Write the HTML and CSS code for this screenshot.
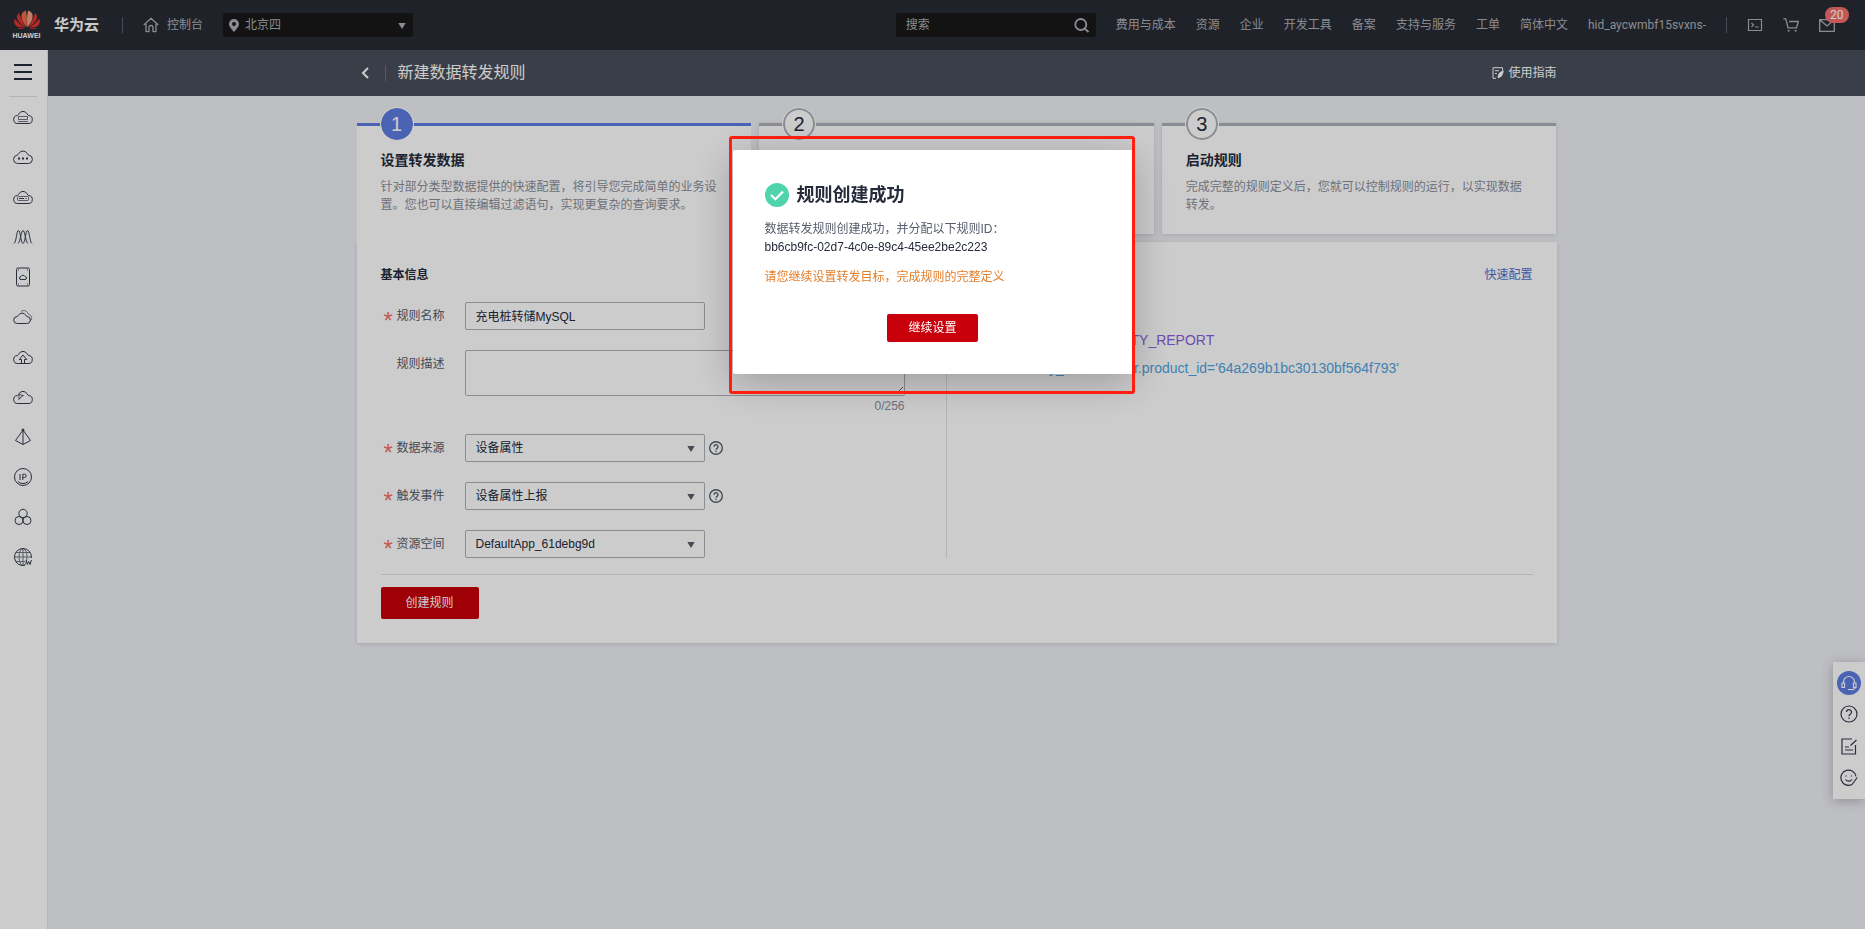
FILE: index.html
```html
<!DOCTYPE html>
<html lang="zh-CN">
<head>
<meta charset="utf-8">
<meta name="viewport" content="width=device-width, initial-scale=1">
<title>新建数据转发规则</title>
<link rel="stylesheet" href="styles.css">
</head>
<body>
<header class="topbar">
  <a class="brand" href="#">
    <span class="brand-mark">
      <svg class="logo" viewBox="0 0 26 19" aria-hidden="true">
        <g fill="#e3342f">
          <path d="M12.6 17.2C8.600 12.500 7 8.500 7.400 5.200 7.700 2.600 9.600 1 11.900.4c1.200 4.500 1.300 10.500.7 16.800z" fill="#ef6a4c"/>
          <path d="M13.400 17.200C17.400 12.500 19 8.500 18.600 5.200 18.300 2.600 16.400 1 14.100.4c-1.200 4.500-1.300 10.500-.7 16.800z" fill="#f0a080"/>
          <path d="M11.700 17.300C7.600 14.800 3.600 11.500 3 8c-.4-2.300.6-4 2-5 1.600 5 4 10 6.700 14.300z"/>
          <path d="M14.300 17.300C18.400 14.800 22.400 11.500 23 8c.4-2.300-.6-4-2-5-1.600 5-4 10-6.700 14.300z"/>
          <path d="M11.200 17.700C6.500 17.700 2.400 17 .9 14.300-.1 12.400 0 10.500.7 8.800 3.500 12.300 7.300 15.400 11.200 17.700z"/>
          <path d="M14.800 17.700C19.500 17.700 23.600 17 25.100 14.300c1-1.900.9-3.800.2-5.500C22.500 12.300 18.700 15.400 14.800 17.700z"/>
          <path d="M11 18.300c-2.600.9-5 1-6.800.2C3.100 18 2.400 17.300 2.100 17.300c2.800.9 5.900 1.100 8.900 1z"/>
          <path d="M15 18.300c2.600.9 5 1 6.800.2 1.100-.5 1.800-1.200 2.100-1.200-2.800.9-5.900 1.100-8.900 1z"/>
        </g>
      </svg>
      <span class="brand-word">HUAWEI</span>
    </span>
    <span class="brand-name">华为云</span>
  </a>
  <span class="bar-divider"></span>
  <a class="home" href="#">
    <svg class="icon-home" viewBox="0 0 16 16" aria-hidden="true"><path d="M.8 8 8 1.200 15.200 8M3 7v7.600h3V10.500a2 2 0 0 1 4 0v4.100h3V7" fill="none" stroke="currentColor" stroke-width="1.300" stroke-linejoin="round"/></svg>
    控制台
  </a>
  <div class="region">
    <svg class="icon-pin" viewBox="0 0 10 13" aria-hidden="true"><path fill="currentColor" fill-rule="evenodd" d="M5 0a5 5 0 0 1 5 5c0 3.200-3.300 5.800-5 8C3.300 10.800 0 8.200 0 5a5 5 0 0 1 5-5zm0 3a2 2 0 1 0 0 4 2 2 0 0 0 0-4z"/></svg>
    <select class="region-select" aria-label="区域"><option>北京四</option></select>
    <svg class="caret" viewBox="0 0 8 7" aria-hidden="true"><path fill="currentColor" d="M.3 1h7.400L4 7z"/></svg>
  </div>
  <div class="search">
    <input class="search-input" type="text" placeholder="搜索" aria-label="搜索">
    <svg class="icon-search" viewBox="0 0 15 15" aria-hidden="true"><g fill="none" stroke="currentColor" stroke-width="1.800"><circle cx="6.800" cy="6.500" r="5.500"/><path d="M10.800 10.500 14.400 14"/></g></svg>
  </div>
  <nav class="links">
    <a href="#">费用与成本</a><a href="#">资源</a><a href="#">企业</a><a href="#">开发工具</a><a href="#">备案</a><a href="#">支持与服务</a><a href="#">工单</a><a href="#">简体中文</a><a class="account" href="#">hid_aycwmbf15svxns-</a>
  </nav>
  <span class="bar-divider"></span>
  <div class="tools">
    <button class="tool" aria-label="终端"><svg viewBox="0 0 16 16"><path d="M1.500 2.500h13v11h-13zM4.500 6l2 2-2 2M8 10h3.500" fill="none" stroke="currentColor" stroke-width="1.200"/></svg></button>
    <button class="tool" aria-label="购物车"><svg viewBox="0 0 16 16"><path d="M.3 1.800h2.500L5 10.800h8.500l1.800-6.300H6" fill="none" stroke="currentColor" stroke-width="1.300"/><circle cx="5.600" cy="13.800" r="1" fill="currentColor"/><circle cx="12.600" cy="13.800" r="1" fill="currentColor"/></svg></button>
    <button class="tool" aria-label="消息"><svg viewBox="0 0 16 16"><path d="M.7 2.700h14.600v11.600H.7zM1 3l7 6 7-6" fill="none" stroke="currentColor" stroke-width="1.300"/></svg><span class="badge">20</span></button>
  </div>
</header>

<div class="shell">
  <aside class="sidebar">
    <button class="menu" aria-label="菜单"><svg viewBox="0 0 18 16"><path d="M0 1h18M0 8h18M0 15h18" stroke="currentColor" stroke-width="2"/></svg></button>
    <nav class="services">
      <a href="#" aria-label="弹性云服务器"><svg viewBox="0 0 20 20"><path d="M5 16.500a4 4 0 0 1-.6-8c.6-.2 1-.6 1.500-1.700a4.700 4.700 0 0 1 8.200 0c.4 1 .9 1.500 1.500 1.700a4 4 0 0 1-.6 8z"/><path opacity=".7" d="M5.500 9.500h9v3h-9zM5 14.500h10"/></svg></a>
      <a href="#" aria-label="云耀云服务器"><svg viewBox="0 0 20 20"><path d="M4.500 16.500a4.200 4.200 0 0 1-.6-8.300c.8-.2 1.200-.6 1.700-1.500a5 5 0 0 1 8.800 0c.5.900.9 1.300 1.700 1.500a4.200 4.200 0 0 1-.6 8.300z"/><path d="M5 11.500h2M9 11.500h2M13 11.500h2" stroke-width="2"/></svg></a>
      <a href="#" aria-label="裸金属服务器"><svg viewBox="0 0 20 20"><path d="M5 16.500a4 4 0 0 1-.6-8c.6-.2 1-.6 1.500-1.700a4.700 4.700 0 0 1 8.200 0c.4 1 .9 1.500 1.500 1.700a4 4 0 0 1-.6 8z"/><rect opacity=".7" x="4.500" y="9.500" width="11" height="4" rx="1"/><path d="M6 11.500h5M12.500 11.500h1"/></svg></a>
      <a href="#" aria-label="弹性伸缩"><svg viewBox="0 0 20 20"><path d="M1 16.500C3.500 15 3.500 3.500 5.500 3.500S7.500 15 10 16.500M5 16.500C7.500 15 8 3.500 10 3.500s2.500 11.500 5 13M10 16.500c2.500-1.500 2.500-13 4.500-13s2 11.500 4.500 13"/></svg></a>
      <a href="#" aria-label="云硬盘"><svg viewBox="0 0 20 20"><rect x="3.500" y="1" width="13" height="18" rx="1.500"/><path d="M5 3h1M14 3h1M5 17h1M14 17h1M8 12.500a1.500 1.500 0 0 1 0-3 2.200 2.200 0 0 1 4 0 1.500 1.500 0 0 1 0 3z"/></svg></a>
      <a href="#" aria-label="云备份"><svg viewBox="0 0 20 20"><path d="M4.500 16.500a3.500 3.500 0 0 1-.5-7c.6-.1.900-.4 1.300-1.200a4.300 4.300 0 0 1 7.500 0c.4.800.8 1.100 1.300 1.200a3.500 3.500 0 0 1-.5 7z"/><path opacity=".6" d="M8 4.500a4.300 4.300 0 0 1 6.800 1.700c.4.900.7 1.100 1.300 1.300a3.600 3.600 0 0 1 1 6.500"/></svg></a>
      <a href="#" aria-label="对象存储"><svg viewBox="0 0 20 20"><path d="M5 16.500a4 4 0 0 1-.6-8c.6-.2 1-.6 1.500-1.700a4.700 4.700 0 0 1 8.200 0c.4 1 .9 1.500 1.500 1.700a4 4 0 0 1-.6 8z"/><path d="M8.500 16.500v-4H6.300L10 8l3.700 4.500h-2.200v4"/></svg></a>
      <a href="#" aria-label="内容分发"><svg viewBox="0 0 20 20"><path d="M5 16.500a4 4 0 0 1-.6-8c.6-.2 1-.6 1.500-1.700a4.700 4.700 0 0 1 8.200 0c.4 1 .9 1.500 1.500 1.700a4 4 0 0 1-.6 8z"/><path opacity=".8" d="M6 7.500v5l2-2.500 2.500-1.500z"/></svg></a>
      <a href="#" aria-label="弹性负载均衡"><svg viewBox="0 0 20 20"><path d="M10 3 2.500 13.500 10 17.500l7.500-4zM10 3v14.500"/><circle cx="10" cy="3" r="1" fill="currentColor"/></svg></a>
      <a href="#" aria-label="弹性公网IP"><svg viewBox="0 0 20 20"><circle cx="10" cy="10" r="8.500"/><path d="M7 7v6M9.800 13V7.200h1.700a1.600 1.600 0 0 1 0 3.300H9.800M5 14.500a7 7 0 0 0 10 0"/></svg></a>
      <a href="#" aria-label="数据库"><svg viewBox="0 0 20 20"><circle cx="10" cy="6.500" r="4.200"/><circle cx="6" cy="13.500" r="4"/><circle cx="14" cy="13.500" r="4"/></svg></a>
      <a href="#" aria-label="域名注册"><svg viewBox="0 0 20 20"><path d="M12 18.300A8.500 8.500 0 1 1 18.400 11"/><g opacity=".7"><ellipse cx="10" cy="10" rx="4" ry="8.500"/><path d="M1.500 10h17M3 5.500h14M3 14.500h9M10 1.500v17"/></g><path d="m13 13 1.300 4.500 1.400-3 1.400 3 1.300-4.500"/></svg></a>
    </nav>
  </aside>

  <div class="page">
    <div class="titlebar">
      <div class="wrap titlebar-row">
        <button class="back" aria-label="返回"><svg viewBox="0 0 8 12"><path d="M7 1 2 6l5 5" fill="none" stroke="currentColor" stroke-width="2"/></svg></button>
        <span class="title-divider"></span>
        <h1 class="page-title">新建数据转发规则</h1>
        <a class="guide" href="#"><svg viewBox="0 0 12 12"><path d="M10.500 3.500V.7H1v10.600h3M3 3.700h4M3 6.500h2" fill="none" stroke="currentColor"/><path d="M11.800 3.500C8.500 4 6 6 5.500 11c3.500 0 5.500-2.500 6.300-7.500z" fill="currentColor"/></svg>使用指南</a>
      </div>
    </div>

    <main class="wrap content">
      <ol class="steps">
        <li class="step step-active">
          <span class="step-no">1</span>
          <h2 class="step-title">设置转发数据</h2>
          <p class="step-text">针对部分类型数据提供的快速配置，将引导您完成简单的业务设置。您也可以直接编辑过滤语句，实现更复杂的查询要求。</p>
        </li>
        <li class="step">
          <span class="step-no">2</span>
        </li>
        <li class="step">
          <span class="step-no">3</span>
          <h2 class="step-title">启动规则</h2>
          <p class="step-text">完成完整的规则定义后，您就可以控制规则的运行，以实现数据转发。</p>
        </li>
      </ol>

      <form class="panel">
        <div class="columns">
          <section class="basic">
            <h3 class="section-title">基本信息</h3>
            <div class="field">
              <label class="label required" for="name">规则名称</label>
              <input class="control" id="name" type="text" value="充电桩转储MySQL">
            </div>
            <div class="field field-area">
              <label class="label" for="desc">规则描述</label>
              <div class="area">
                <textarea class="control textarea" id="desc"></textarea>
                <span class="counter">0/256</span>
              </div>
            </div>
            <div class="field">
              <label class="label required" for="source">数据来源</label>
              <div class="select"><select class="control" id="source"><option>设备属性</option></select><svg class="caret" viewBox="0 0 8 7"><path fill="currentColor" d="M.3 1h7.400L4 7z"/></svg></div>
              <svg class="help" viewBox="0 0 14 14"><circle cx="7" cy="7" r="6.300"/><path d="M5 5.700a2 2 0 1 1 3 1.700c-.7.400-1 .7-1 1.400M7 9.800v1.300"/></svg>
            </div>
            <div class="field">
              <label class="label required" for="event">触发事件</label>
              <div class="select"><select class="control" id="event"><option>设备属性上报</option></select><svg class="caret" viewBox="0 0 8 7"><path fill="currentColor" d="M.3 1h7.400L4 7z"/></svg></div>
              <svg class="help" viewBox="0 0 14 14"><circle cx="7" cy="7" r="6.300"/><path d="M5 5.700a2 2 0 1 1 3 1.700c-.7.400-1 .7-1 1.400M7 9.800v1.300"/></svg>
            </div>
            <div class="field">
              <label class="label required" for="space">资源空间</label>
              <div class="select"><select class="control" id="space"><option>DefaultApp_61debg9d</option></select><svg class="caret" viewBox="0 0 8 7"><path fill="currentColor" d="M.3 1h7.400L4 7z"/></svg></div>
            </div>
          </section>
          <section class="query">
            <a class="quick" href="#">快速配置</a>
            <dl class="statement">
              <div class="clause"><dt>FROM</dt><dd class="event-name">DEVICE_PROPERTY_REPORT</dd></div>
              <div class="clause"><dt>WHERE</dt><dd class="condition">notify_data.header.product_id='64a269b1bc30130bf564f793'</dd></div>
            </dl>
          </section>
        </div>
        <div class="actions"><button class="primary create" type="button">创建规则</button></div>
      </form>
    </main>
  </div>
</div>

<div class="dock">
  <button class="dock-item dock-main" aria-label="在线客服"><svg viewBox="0 0 16 16"><path d="M2.500 8V7a5.500 5.500 0 0 1 11 0v1M1 8h2.500v4.500H1zM12.500 8H15v4.500h-2.500zM14 12.500c0 1.500-1.500 2.200-4 2.200M7 14.500h3"/></svg></button>
  <button class="dock-item" aria-label="帮助"><svg viewBox="0 0 18 18"><circle cx="9" cy="9" r="8"/><path d="M6.500 7a2.500 2.500 0 1 1 3.800 2.200c-1 .6-1.300 1-1.300 2M9 12.500V14"/></svg></button>
  <button class="dock-item" aria-label="反馈"><svg viewBox="0 0 18 18"><path d="M12 2H2v15h13.500V8M5 10h4M5 13h8M10.500 8.500 16.500 3"/></svg></button>
  <button class="dock-item" aria-label="评价"><svg viewBox="0 0 18 18"><path d="M16 7.500A7.600 7.600 0 1 0 12 15.500M5.500 10.500c1.500 2.200 5 2.200 6.500 0M6 6.500v1M11.500 6.500v1M12 15.500l5.300-7"/></svg></button>
</div>

<div class="mask">
  <div class="dialog" role="dialog" aria-labelledby="dialog-title">
    <span class="outline"></span>
    <div class="dialog-head">
      <svg class="ok" viewBox="0 0 24 24"><circle cx="12" cy="12" r="12" fill="#50d4ab"/><path d="m6 12 4.300 4.300L18 8.600" fill="none" stroke="#fff" stroke-width="2.200"/></svg>
      <h2 class="dialog-title" id="dialog-title">规则创建成功</h2>
    </div>
    <p class="dialog-text">数据转发规则创建成功，并分配以下规则ID：</p>
    <p class="dialog-id">bb6cb9fc-02d7-4c0e-89c4-45ee2be2c223</p>
    <p class="dialog-hint">请您继续设置转发目标，完成规则的完整定义</p>
    <button class="primary continue" type="button">继续设置</button>
  </div>
</div>
</body>
</html>
```
FILE: styles.css
```css
* { box-sizing: border-box; }

body {
  margin: 0;
  min-height: 100vh;
  display: flex;
  flex-direction: column;
  background: #eeeff4;
  color: #252b3a;
  font: 12px/18px "Liberation Sans", "Noto Sans CJK SC", sans-serif;
}

h1, h2, h3, p, ol, dl, dd { margin: 0; padding: 0; }
a { color: inherit; text-decoration: none; }
button, input, select, textarea { font: inherit; color: inherit; }
button { padding: 0; border: 0; background: none; cursor: pointer; }
svg { display: block; flex: none; }

/* Top bar */
.topbar {
  display: flex;
  align-items: center;
  height: 50px;
  padding: 0 30px 0 13px;
  background: #272b33;
  color: #adb0b8;
}
.brand { display: flex; align-items: center; gap: 14px; margin-right: 23px; }
.brand-mark { display: flex; flex-direction: column; align-items: center; gap: 3px; width: 27px; }
.logo { width: 26px; height: 19px; }
.brand-word { font: bold 7px/8px "Liberation Sans", sans-serif; color: #fff; }
.brand-name { font-size: 15px; font-weight: bold; color: #fff; }
.bar-divider { width: 1px; height: 16px; background: #575d6c; }
.home { display: flex; align-items: center; gap: 8px; margin: 0 20px; }
.icon-home { width: 16px; height: 16px; }
.region, .search {
  position: relative;
  display: flex;
  align-items: center;
  height: 24px;
  border-radius: 2px;
  background: #181818;
}
.region { width: 190px; padding: 0 7px 0 6px; gap: 6px; }
.icon-pin { width: 10px; height: 13px; }
.region-select { flex: 1; appearance: none; border: 0; padding: 0; background: none; }
.caret { width: 8px; height: 7px; }
.search { width: 200px; margin-left: auto; padding: 0 7px 0 10px; }
.search-input { flex: 1; min-width: 0; border: 0; padding: 0; background: none; }
.search-input::placeholder { color: #adb0b8; opacity: 1; }
.icon-search { width: 15px; height: 15px; }
.links { display: flex; gap: 20px; margin: 0 20px; white-space: nowrap; }
.account { font-family: Roboto, sans-serif; }
.tools { display: flex; gap: 20px; margin-left: 20px; }
.tool { position: relative; width: 16px; height: 16px; }
.tool svg { width: 16px; height: 16px; }
.badge {
  position: absolute;
  left: 6px;
  top: -10px;
  padding: 0 5px;
  border-radius: 8px;
  background: #f66f6a;
  color: #fff;
  font: 12px/16px Roboto, sans-serif;
}

/* Sidebar */
.shell { display: flex; flex: 1; }
.sidebar {
  display: flex;
  flex-direction: column;
  align-items: center;
  width: 48px;
  padding-right: 1px;
  border-right: 1px solid #dfe1e6;
  background: #fff;
}
.menu { padding: 14px 5px 16px; border-bottom: 1px solid #dfe1e6; }
.menu svg { width: 18px; height: 16px; }
.services { display: flex; flex-direction: column; gap: 20px; padding-top: 10px; }
.services svg {
  width: 20px;
  height: 20px;
  fill: none;
  stroke: #353b4c;
  stroke-width: 1;
}

/* Page frame */
.page { flex: 1; min-width: 0; }
.wrap { max-width: 1200px; margin: 0 auto; }
.titlebar { background: #494e5a; color: #fff; }
.titlebar-row { display: flex; align-items: center; height: 46px; padding-left: 4px; }
.back svg { width: 8px; height: 12px; }
.title-divider { width: 1px; height: 16px; margin: 0 12px 0 16px; background: #6c7280; }
.page-title { font-size: 16px; line-height: 24px; font-weight: normal; }
.guide { display: flex; align-items: center; gap: 4px; margin-left: auto; }
.guide svg { width: 12px; height: 12px; }
.content { padding-top: 27px; }

/* Steps */
.steps { display: grid; grid-template-columns: repeat(3, 1fr); gap: 8px; list-style: none; }
.step {
  position: relative;
  height: 111px;
  padding: 25px 24px 0;
  border-top: 3px solid #adb0b8;
  background: #fff;
  box-shadow: 0 1px 4px rgba(37, 43, 58, .14);
}
.step-active { height: 119px; border-top-color: #5e7ce0; box-shadow: none; }
.step-no {
  position: absolute;
  top: -18px;
  left: 24px;
  width: 32px;
  height: 32px;
  border: 2px solid #adb0b8;
  border-radius: 50%;
  outline: 1px solid #fff;
  background: #fff;
  font-size: 20px;
  line-height: 29px;
  text-align: center;
}
.step-active .step-no { border-color: #5e7ce0; background: #5e7ce0; color: #fff; }
.step-title { font-size: 14px; line-height: 18px; }
.step-text { margin-top: 9px; color: #8a8e99; }

/* Form */
.panel {
  padding: 24px;
  background: #fff;
  box-shadow: 0 1px 4px rgba(37, 43, 58, .14);
}
.columns { display: flex; padding-bottom: 16px; border-bottom: 1px solid #dfe1e6; }
.basic { flex: 566px 1 1; border-right: 1px solid #dfe1e6; }
.section-title { margin-bottom: 18px; font-size: 12px; line-height: 18px; }
.field { display: flex; align-items: center; margin-bottom: 20px; }
.field:last-child { margin-bottom: 0; }
.label { width: 84px; padding-left: 16px; color: #575d6c; position: relative; }
.required::before {
  content: "*";
  position: absolute;
  left: 3px;
  top: 5px;
  color: #f66f6a;
  font-size: 24px;
}
.control {
  width: 240px;
  height: 28px;
  padding: 0 10px;
  border: 1px solid #adb0b8;
  border-radius: 2px;
  background: #fff;
}
input.control { padding-bottom: 2px; }
.field-area { align-items: flex-start; margin-bottom: 18px; }
.field-area .label { padding-top: 5px; }
.area { display: flex; flex-direction: column; align-items: flex-end; }
.textarea { display: block; width: 440px; height: 46px; }
.counter { line-height: 20px; color: #8a8e99; }
.select { position: relative; }
select.control { appearance: none; display: block; }
.select .caret { position: absolute; right: 10px; top: 11px; color: #575d6c; pointer-events: none; }
.help {
  width: 14px;
  height: 14px;
  margin-left: 4px;
  fill: none;
  stroke: #575d6c;
  stroke-width: 1.400;
}
.query { flex: 586px 1 1; }
.quick { display: block; text-align: right; color: #526ecc; }
.statement {
  display: flex;
  flex-direction: column;
  gap: 8px;
  margin: 46px 0 0 20px;
  font-size: 14px;
  line-height: 20px;
}
.clause { display: flex; gap: 4px; }
.event-name { color: #8a5ee0; }
.condition { color: #4fa3e0; }
.primary { border-radius: 2px; background: #c7000b; color: #fff; }
.actions { padding-top: 12px; }
.create { display: block; height: 32px; padding: 0 25px; }

/* Floating help */
.dock {
  position: fixed;
  right: 0;
  bottom: 130px;
  display: flex;
  flex-direction: column;
  align-items: center;
  gap: 14px;
  width: 32px;
  padding: 9px 0 12px;
  background: #fff;
  box-shadow: 0 2px 12px rgba(37, 43, 58, .3);
}
.dock-item svg {
  width: 18px;
  height: 18px;
  fill: none;
  stroke: #353b4c;
  stroke-width: 1.200;
}
.dock-main { padding: 4px; margin-bottom: -4px; border-radius: 50%; background: #5e7ce0; }
.dock-main svg { width: 16px; height: 16px; stroke: #fff; }

/* Dialog */
.mask {
  position: fixed;
  inset: 0;
  display: flex;
  align-items: flex-start;
  justify-content: center;
  padding-top: 150px;
  background: rgba(0, 0, 0, .2);
}
.dialog {
  position: relative;
  display: flex;
  flex-direction: column;
  width: 400px;
  padding: 32px;
  border-radius: 2px;
  background: #fff;
  box-shadow: 0 8px 40px rgba(0, 0, 0, .25);
}
.outline {
  position: absolute;
  inset: -14px -2px -20px -4px;
  border: 3px solid #ff1e10;
  border-radius: 3px;
  pointer-events: none;
}
.dialog-head { display: flex; align-items: center; gap: 8px; margin-bottom: 12px; }
.ok { width: 24px; height: 24px; }
.dialog-title { font-size: 18px; line-height: 26px; }
.dialog-text { color: #575d6c; }
.dialog-hint { margin: 12px 0 28px; color: #e37d29; }
.continue { align-self: center; height: 28px; padding: 0 21px; }
```
